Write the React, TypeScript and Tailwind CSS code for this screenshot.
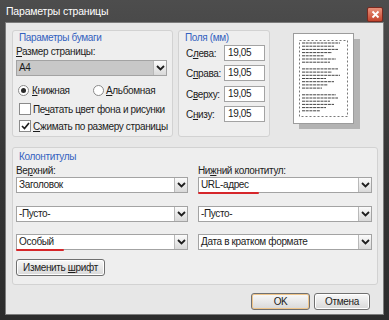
import React from 'react';

const Chevron = () => (
  <svg width="9" height="6" viewBox="0 0 9 6">
    <path d="M1 1 L4.5 4.5 L8 1" stroke="#1e1e1e" strokeWidth="1.8" fill="none" />
  </svg>
);

interface SelectProps {
  value: string;
  className?: string;
  gray?: boolean;
  mark?: string;
}

// combo box with the little drop button on the right
const Select: React.FC<SelectProps> = ({ value, className = '', gray, mark }) => {
  return (
    <div
      className={`relative flex h-[16px] border border-[#a3a3a3] ${gray ? 'bg-[#c8c8c8]' : 'bg-white'} ${className}`}
    >
      <div className="flex-1 pl-[2px] leading-[14px] whitespace-nowrap">{value}</div>
      <div className="w-[13px] border-l border-[#b9b9b9] bg-gradient-to-b from-[#fbfbfb] to-[#d9d9d9] flex items-center justify-center">
        <Chevron />
      </div>
      {mark && <span className={`absolute bottom-[-2px] left-[-1px] h-[2px] rounded-full bg-[#d6262a] ${mark}`} />}
    </div>
  );
};

const U: React.FC<{ children: React.ReactNode }> = ({ children }) => <span className="underline">{children}</span>;

const Group: React.FC<{ title: string; className?: string; children: React.ReactNode }> = ({
  title,
  className = '',
  children,
}) => (
  <div className={`flex flex-col border border-[#d2d2d2] rounded-[3px] bg-[#eeeeee] ${className}`}>
    <div className="h-[13px] leading-[13px] pl-[6px] text-[#3462c0]">{title}</div>
    {children}
  </div>
);

const Radio: React.FC<{ checked?: boolean }> = ({ checked }) => (
  <span className="w-[11px] h-[11px] shrink-0 rounded-full border border-[#8a8a8a] bg-white flex items-center justify-center">
    {checked && <span className="w-[5px] h-[5px] rounded-full bg-[#2a2a2a]" />}
  </span>
);

const Check: React.FC<{ checked?: boolean }> = ({ checked }) => (
  <span className="w-[12px] h-[12px] shrink-0 border border-[#8a8a8a] bg-white flex items-center justify-center">
    {checked && (
      <svg width="9" height="8" viewBox="0 0 9 8">
        <path d="M1 4 L3.5 6.5 L8 1" stroke="#1e1e1e" strokeWidth="1.7" fill="none" />
      </svg>
    )}
  </span>
);

const Field: React.FC<{ label: React.ReactNode; className?: string }> = ({ label, className = '' }) => (
  <div className={`flex items-center h-[16px] pl-[7px] ${className}`}>
    <span className="w-[38px] whitespace-nowrap">{label}</span>
    <div className="w-[41px] h-[16px] border border-[#a3a3a3] bg-white pl-[3px] leading-[14px]">19,05</div>
  </div>
);

const PagePreview = () => {
  const lines = [
    [38, 32, 36, 30, 22, 34, 28],
    [36, 30, 38, 24, 32, 26, 20],
    [34, 36, 28, 32, 24, 18],
  ];
  const rows: { y: number; w: number }[] = [];
  let y = 10;
  lines.forEach((p) => {
    p.forEach((w) => {
      rows.push({ y, w });
      y += 3.2;
    });
    y += 3.5;
  });
  return (
    <svg width="70" height="97" viewBox="0 0 70 97" className="ml-[23px] mt-[3px]">
      <rect x="6" y="6" width="61" height="90" fill="#b3b3b3" />
      <rect x="0.5" y="0.5" width="60" height="90" fill="#fff" stroke="#9c9c9c" />
      <rect x="6.5" y="7.5" width="48" height="76" fill="none" stroke="#555" strokeDasharray="2 2" strokeWidth="0.8" />
      {rows.map((r, i) => (
        <line key={i} x1="9" x2={9 + r.w} y1={r.y} y2={r.y} stroke="#444" strokeWidth="1" strokeDasharray="3 0.7" />
      ))}
    </svg>
  );
};

const Button: React.FC<{ label: React.ReactNode; className?: string; primary?: boolean }> = ({
  label,
  className = '',
  primary,
}) => (
  <div
    className={`h-[17px] flex items-center justify-center rounded-[3px] border border-[#707070] bg-gradient-to-b from-[#f9f9f9] to-[#d8d8d8] ${
      primary ? 'shadow-[inset_0_0_0_1px_#efc58a]' : 'shadow-[inset_0_0_0_1px_#ffffff]'
    } ${className}`}
  >
    <span className="whitespace-nowrap">{label}</span>
  </div>
);

export default function App() {
  return (
    <div className="w-[389px] h-[320px] flex flex-col bg-gradient-to-b from-[#4d4d4d] via-[#353535] to-[#2c2c2c] px-[5px] pb-[5px] font-['Liberation_Sans',sans-serif] text-[10px] tracking-[-0.35px] text-[#1c1c1c]">
      {/* title bar */}
      <div className="h-[22px] flex items-start justify-between -mx-[5px] pl-[6px] pr-[6px]">
        <span className="text-white text-[10.5px] leading-[12px] mt-[5px] tracking-[-0.2px]">Параметры страницы</span>
        <div className="w-[16px] h-[15px] mt-[7px] rounded-[2px] border border-[#7a2a20] bg-gradient-to-b from-[#e8907a] to-[#c4432c] flex items-center justify-center">
          <svg width="9" height="9" viewBox="0 0 9 9">
            <path d="M1.5 1.5 L7.5 7.5 M7.5 1.5 L1.5 7.5" stroke="#fff" strokeWidth="1.8" />
          </svg>
        </div>
      </div>

      {/* dialog body */}
      <div className="flex-1 flex flex-col border border-[#7c7c7c] bg-[#e7e7e7] pl-[6px] pt-[7px]">
        <div className="flex">
          <Group title="Параметры бумаги" className="w-[161px] h-[107px]">
            <div className="h-[12px] leading-[12px] mt-[2px] pl-[3px]">
              <U>Р</U>азмер страницы:
            </div>
            <Select value="A4" gray className="w-[151px] ml-[3px] mt-[2px]" />
            <div className="flex items-center h-[14px] mt-[7px] pl-[5px]">
              <Radio checked />
              <span className="ml-[3px] w-[61px]">
                <U>К</U>нижная
              </span>
              <Radio />
              <span className="ml-[2px]">
                <U>А</U>льбомная
              </span>
            </div>
            <div className="flex items-center h-[14px] mt-[5px] pl-[6px]">
              <Check />
              <span className="ml-[2px] whitespace-nowrap">
                Пе<U>ч</U>атать цвет фона и рисунки
              </span>
            </div>
            <div className="flex items-center h-[14px] mt-[3px] pl-[6px]">
              <Check checked />
              <span className="ml-[2px] whitespace-nowrap">
                <U>С</U>жимать по размеру страницы
              </span>
            </div>
          </Group>

          <Group title="Поля (мм)" className="w-[92px] h-[107px] ml-[5px]">
            <Field label={<>С<U>л</U>ева:</>} className="mt-[1px]" />
            <Field label={<>С<U>п</U>рава:</>} className="mt-[4px]" />
            <Field label={<>С<U>в</U>ерху:</>} className="mt-[5px]" />
            <Field label={<>С<U>н</U>изу:</>} className="mt-[4px]" />
          </Group>

          <PagePreview />
        </div>

        <Group title="Колонтитулы" className="w-[366px] h-[138px] mt-[10px] pt-[2px]">
          <div className="flex pl-[3px] gap-[10px]">
            <div className="flex flex-col w-[172px]">
              <div className="h-[12px] leading-[12px] mt-[2px]">
                Ве<U>р</U>хний:
              </div>
              <Select value="Заголовок" />
              <Select value="-Пусто-" className="mt-[13px]" />
              <Select value="Особый" mark="w-[48px]" className="mt-[12px]" />
              <Button label={<>Изменить <U>ш</U>рифт</>} className="w-[89px] mt-[9px]" />
            </div>
            <div className="flex flex-col w-[174px]">
              <div className="h-[12px] leading-[12px] mt-[2px]">
                Ни<U>ж</U>ний колонтитул:
              </div>
              <Select value="URL-адрес" mark="w-[61px]" />
              <Select value="-Пусто-" className="mt-[13px]" />
              <Select value="Дата в кратком формате" className="mt-[12px]" />
            </div>
          </div>
        </Group>

        <div className="flex justify-end gap-[4px] pr-[13px] mt-[8px]">
          <Button label="OK" primary className="w-[59px]" />
          <Button label="Отмена" className="w-[56px]" />
        </div>
      </div>
    </div>
  );
}
